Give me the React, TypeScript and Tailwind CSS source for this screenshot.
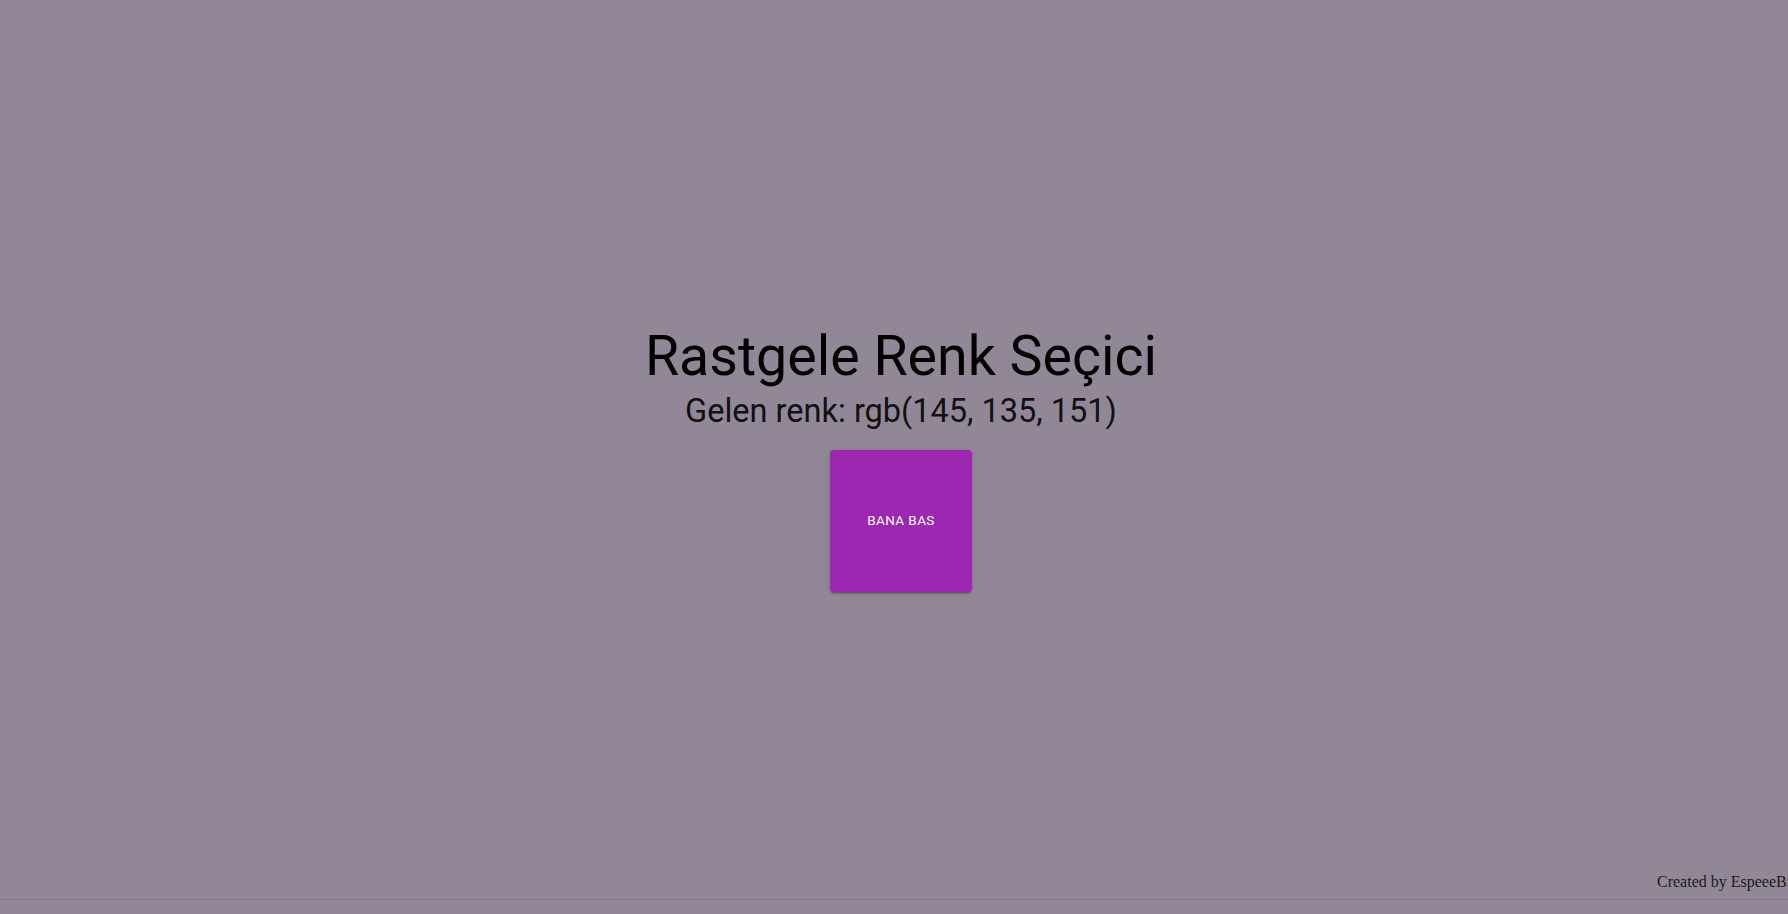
export default function App() {
  return (
    <div className="relative flex h-screen w-full items-center justify-center overflow-hidden bg-[#918797] font-['Roboto',sans-serif]">
      {/* content sits a touch right of centre, like the original */}
      <main className="flex flex-col items-center pl-[14px] pt-[3px]">
        <h1 className="text-[55.5px] leading-[1.167] font-normal text-black">Rastgele Renk Seçici</h1>
        <h2 className="mt-[4px] text-[32.5px] leading-[1.1] font-normal text-black/90">Gelen renk: rgb(145, 135, 151)</h2>
        <button className="mt-[21px] flex h-[142px] w-[142px] items-center justify-center rounded bg-[#9c27b0] pb-[3px] text-[13.5px] font-normal uppercase tracking-[0.4px] text-white shadow-[0_3px_1px_-2px_rgba(0,0,0,0.2),0_2px_2px_0_rgba(0,0,0,0.14),0_1px_5px_0_rgba(0,0,0,0.12)]">
          Bana Bas
        </button>
      </main>

      {/* footer credit, runs off the right edge */}
      <footer className="absolute inset-x-0 bottom-0 pb-[14px]">
        <div className="flex justify-end pb-[8px]">
          <p className="w-[131px] whitespace-nowrap font-['Liberation_Serif',serif] text-base leading-[18px] text-[#1a1a1a]">
            Created by EspeeeBne
          </p>
        </div>
        <div className="border-t border-black/10" />
      </footer>
    </div>
  );
}
